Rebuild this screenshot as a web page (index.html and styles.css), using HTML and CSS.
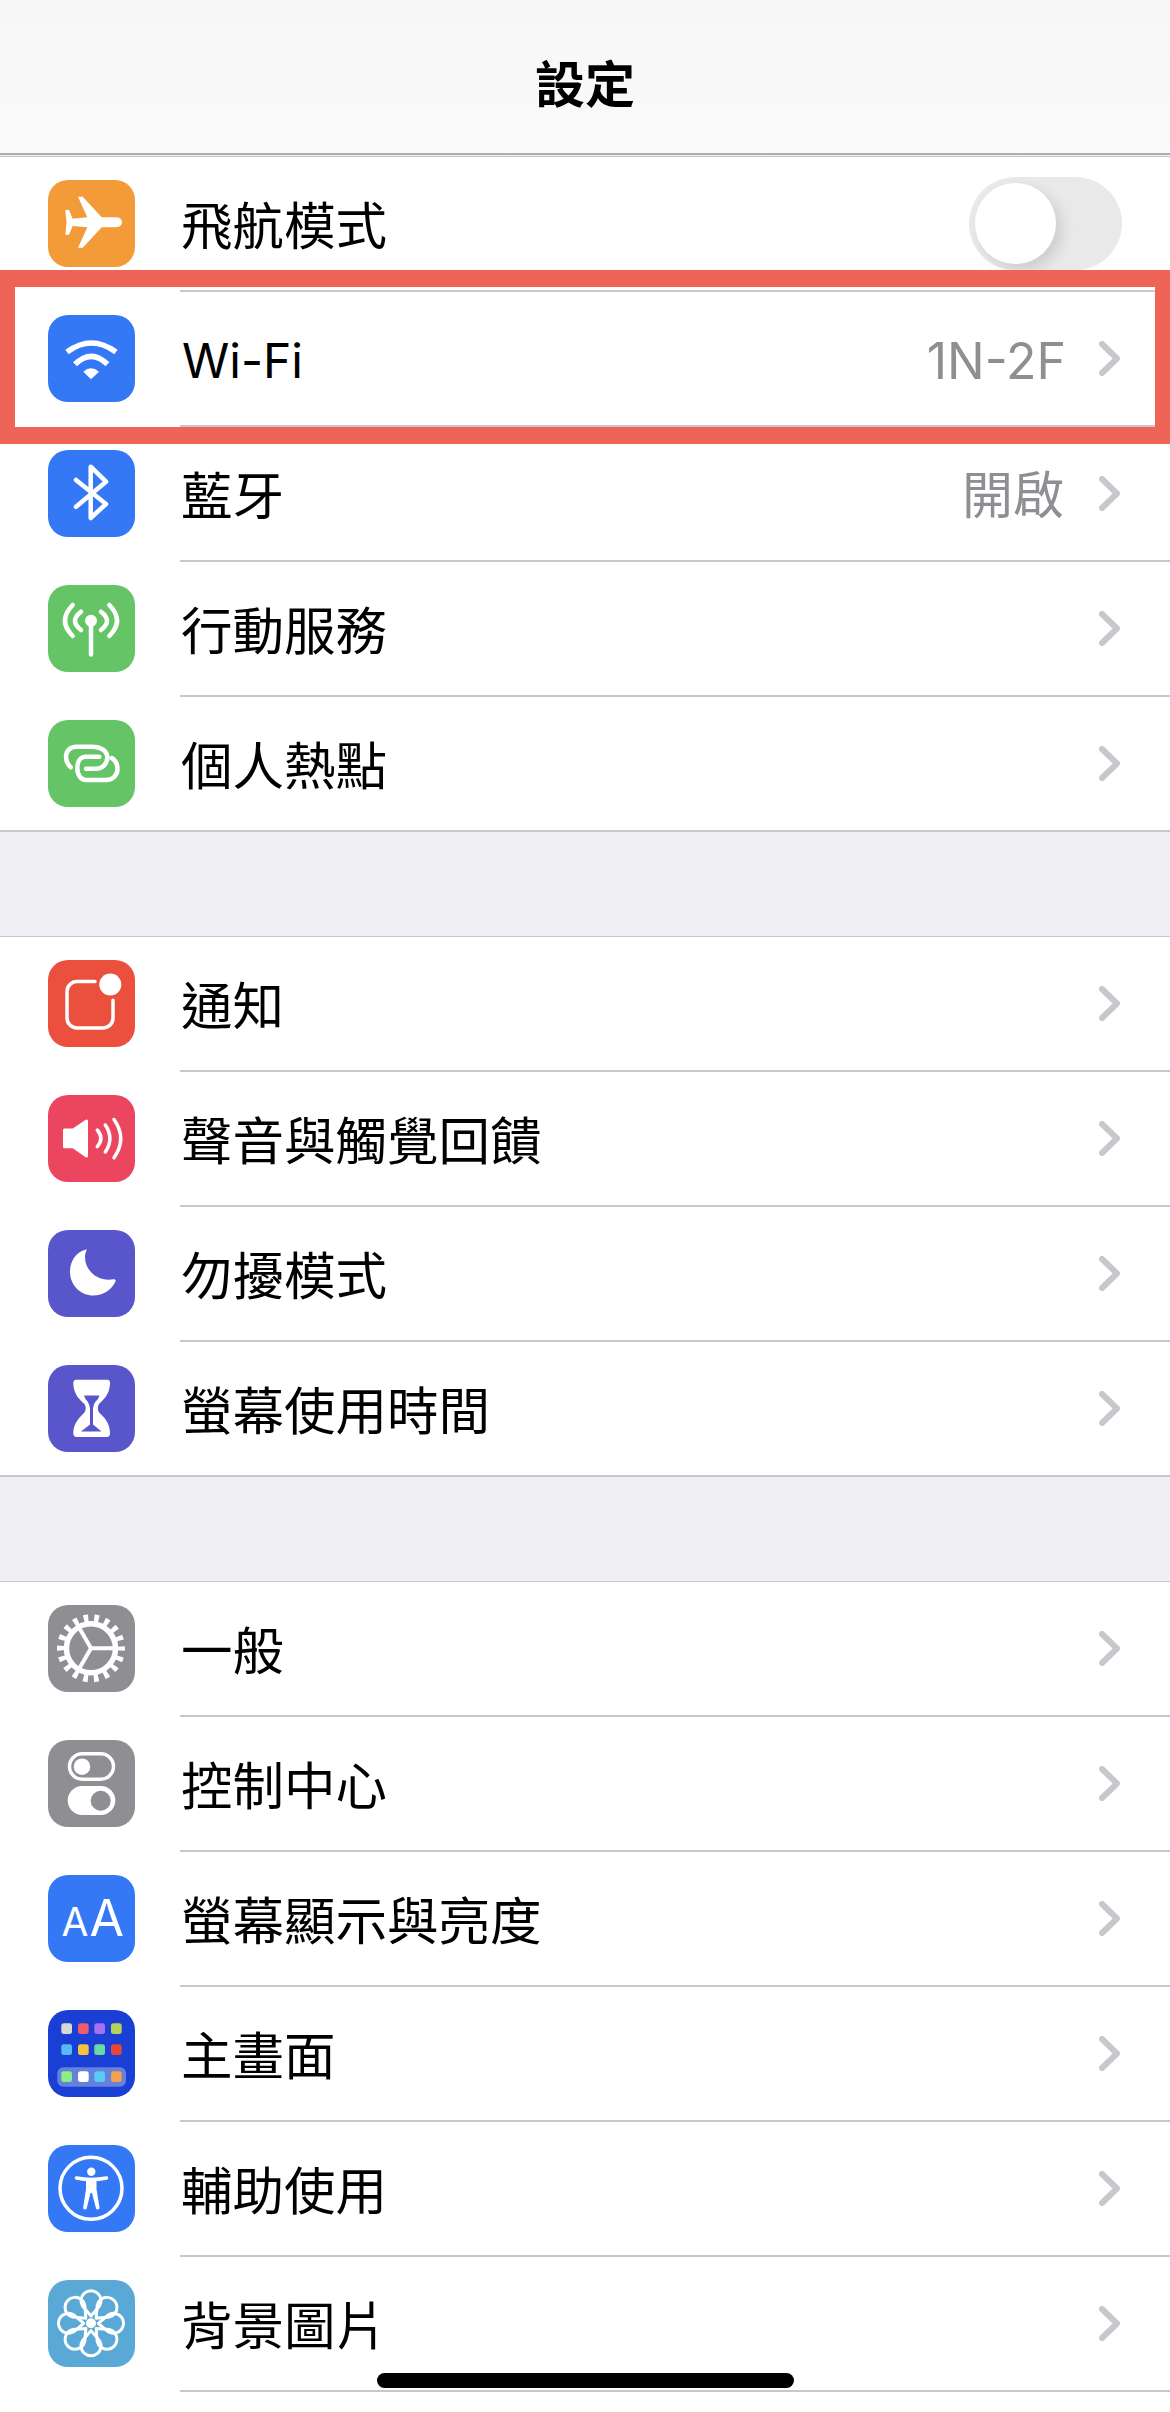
FILE: index.html
```html
<!DOCTYPE html>
<html lang="zh-Hant">
<head>
<meta charset="utf-8">
<title>設定</title>
<link rel="stylesheet" href="styles.css">
</head>
<body>
<div class="screen">
  <header class="nav"><h1 class="nav-title">設定</h1></header>

  <section class="group group-first">
    <div class="row">
      <div class="icon orange"><svg viewBox="0 0 87 87"><path class="w" d="M30 16.7H34.7L53.7 37.3H67Q74 37.3 74 42.3Q74 47.3 67 47.3H53.7L34.7 67.7H30L39.3 47.3L24.7 46L21 54.7H17.3L18.5 42.3L17.3 30H21L24.7 38.7L39.3 37.3Z"/></svg></div>
      <div class="label">飛航模式</div>
      <div class="toggle"><div class="thumb"></div></div>
    </div>
    <div class="row">
      <div class="icon blue"><svg viewBox="0 0 87 87"><path class="s s5" d="M19 37Q43.3 19 68 37"/><path class="s s5" d="M27 49.3Q43.3 33.3 59.5 49.3"/><path class="w" d="M35.3 56.7Q43 50 51 56.7L43 64.3Z"/></svg></div>
      <div class="label label-latin">Wi-Fi</div>
      <div class="value">1N-2F</div>
      <svg class="chev" viewBox="0 0 21 35"><path d="M3 3L18 17.5L3 32"/></svg>
    </div>
    <div class="row">
      <div class="icon blue"><svg viewBox="0 0 87 87"><path class="s" d="M28 30L58 54L42.7 68V16.7L58 31.7L28 56.7"/></svg></div>
      <div class="label">藍牙</div>
      <div class="value value-cjk">開啟</div>
      <svg class="chev" viewBox="0 0 21 35"><path d="M3 3L18 17.5L3 32"/></svg>
    </div>
    <div class="row">
      <div class="icon green"><svg viewBox="0 0 87 87"><circle class="w" cx="43" cy="35.7" r="6"/><path class="s" d="M43 36V69.5"/><path class="s" d="M33 26.7Q21 35.7 33 45M24.7 20Q9.3 35.7 24.7 51M53 26.7Q65 35.7 53 45M61.3 20Q76.7 35.7 61.3 51"/></svg></div>
      <div class="label">行動服務</div>
      <svg class="chev" viewBox="0 0 21 35"><path d="M3 3L18 17.5L3 32"/></svg>
    </div>
    <div class="row">
      <div class="icon green"><svg viewBox="0 0 87 87"><path class="s" d="M22.7 47.3C19.5 44 18 40.5 18 37C18 31 22 26.7 28 26.7H44C53 26.7 59.3 31 59.3 37.5C59.3 44 54 48.7 48 48.7H38"/><path class="s" d="M51.3 36.7H38C32 36.7 29.3 42 29.3 48C29.3 55 33 60 38 60H58C65 60 69.5 55 69.5 49C69.5 44 67 40 63.7 38"/></svg></div>
      <div class="label">個人熱點</div>
      <svg class="chev" viewBox="0 0 21 35"><path d="M3 3L18 17.5L3 32"/></svg>
    </div>
  </section>

  <section class="group group-second">
    <div class="row">
      <div class="icon red"><svg viewBox="0 0 87 87"><path class="s s3" d="M47 21.5H29A10 10 0 0 0 19 31.5V58A10 10 0 0 0 29 68H55A10 10 0 0 0 65 58V40.3"/><circle class="w" cx="62.3" cy="24.5" r="11"/></svg></div>
      <div class="label">通知</div>
      <svg class="chev" viewBox="0 0 21 35"><path d="M3 3L18 17.5L3 32"/></svg>
    </div>
    <div class="row">
      <div class="icon pink"><svg viewBox="0 0 87 87"><path class="w sj" d="M16.5 35H25.3L38.5 26V61L25.3 51.7H16.5Z"/><path class="s s3" d="M49.3 35Q56.5 43.4 49.3 51.7M57.3 30Q66.5 43.4 57.3 57M66 24.5Q79.5 43.4 66 62.7"/></svg></div>
      <div class="label">聲音與觸覺回饋</div>
      <svg class="chev" viewBox="0 0 21 35"><path d="M3 3L18 17.5L3 32"/></svg>
    </div>
    <div class="row">
      <div class="icon indigo"><svg viewBox="0 0 87 87"><path class="w" d="M38 19.5C28 22 22 31 22 41.7C22 55 32.5 65.5 45.5 65.5C55 65.5 63.5 60 67.5 51.5C68 50 67 49 65.5 49.3C50 52 37 41 37 27C37 24.5 37.5 22.5 38.5 20.5C39 19.5 38.7 19.3 38 19.5Z"/></svg></div>
      <div class="label">勿擾模式</div>
      <svg class="chev" viewBox="0 0 21 35"><path d="M3 3L18 17.5L3 32"/></svg>
    </div>
    <div class="row">
      <div class="icon indigo"><svg viewBox="0 0 87 87"><path class="w" d="M28.5 14.8H59Q62.5 14.8 62 19C61.5 30 55 35 51 39Q48.5 43.4 51 47.5C56 52 62 58 62 68Q62 72 59 72H28.5Q25.3 72 25.3 68C25.3 58 32 52 36.5 47.5Q39 43.4 36.5 39C32 35 26 30 25.3 19Q25 14.8 28.5 14.8Z"/><path class="cut" d="M36 30.5H51.5L50 34C46.5 37 45.5 40 45 43.4V59.5L53.5 66.5H33L42 59.5V43.4C41.5 40 40.5 37 37.5 34Z"/></svg></div>
      <div class="label">螢幕使用時間</div>
      <svg class="chev" viewBox="0 0 21 35"><path d="M3 3L18 17.5L3 32"/></svg>
    </div>
  </section>

  <section class="group group-last">
    <div class="row">
      <div class="icon gray"><svg viewBox="0 0 87 87"><circle class="s teeth" cx="43" cy="43.3" r="29.5"/><circle class="s s5" cx="43" cy="43.3" r="24.5"/><path class="s s4" d="M43 43.3H67M43 43.3L31 22.5M43 43.3L31 64"/></svg></div>
      <div class="label">一般</div>
      <svg class="chev" viewBox="0 0 21 35"><path d="M3 3L18 17.5L3 32"/></svg>
    </div>
    <div class="row">
      <div class="icon gray"><svg viewBox="0 0 87 87"><rect class="s s3" x="21.5" y="13.7" width="44" height="25.5" rx="12.7"/><circle class="w" cx="34" cy="26.7" r="8.3"/><rect class="w" x="19.7" y="46" width="47.6" height="29" rx="14.5"/><circle class="cut" cx="52.7" cy="60.7" r="10"/></svg></div>
      <div class="label">控制中心</div>
      <svg class="chev" viewBox="0 0 21 35"><path d="M3 3L18 17.5L3 32"/></svg>
    </div>
    <div class="row">
      <div class="icon blue"><svg viewBox="0 0 87 87"><text class="aa aa-s" x="13.5" y="61">A</text><text class="aa aa-l" x="41.5" y="61">A</text></svg></div>
      <div class="label">螢幕顯示與亮度</div>
      <svg class="chev" viewBox="0 0 21 35"><path d="M3 3L18 17.5L3 32"/></svg>
    </div>
    <div class="row">
      <div class="icon navy"><svg viewBox="0 0 87 87">
        <rect class="dock" x="9.3" y="57.3" width="68.7" height="19.4" rx="6"/>
        <rect fill="#d8d8d2" x="13.3" y="13.3" width="10.7" height="10.7" rx="2.5"/>
        <rect fill="#ec5c6c" x="30" y="13.3" width="10.7" height="10.7" rx="2.5"/>
        <rect fill="#a86ef0" x="46.3" y="13.3" width="10.7" height="10.7" rx="2.5"/>
        <rect fill="#b8d258" x="63" y="13.3" width="10.7" height="10.7" rx="2.5"/>
        <rect fill="#58b8f8" x="13.3" y="34.3" width="10.7" height="10.7" rx="2.5"/>
        <rect fill="#f5c33c" x="30" y="34.3" width="10.7" height="10.7" rx="2.5"/>
        <rect fill="#6ed8a4" x="46.3" y="34.3" width="10.7" height="10.7" rx="2.5"/>
        <rect fill="#e5483a" x="63" y="34.3" width="10.7" height="10.7" rx="2.5"/>
        <rect fill="#8af082" x="13.3" y="61.3" width="10.7" height="10.7" rx="2.5"/>
        <rect fill="#ffffff" x="30" y="61.3" width="10.7" height="10.7" rx="2.5"/>
        <rect fill="#5cc8f8" x="46.3" y="61.3" width="10.7" height="10.7" rx="2.5"/>
        <rect fill="#f4a050" x="63" y="61.3" width="10.7" height="10.7" rx="2.5"/>
      </svg></div>
      <div class="label">主畫面</div>
      <svg class="chev" viewBox="0 0 21 35"><path d="M3 3L18 17.5L3 32"/></svg>
    </div>
    <div class="row">
      <div class="icon blue"><svg viewBox="0 0 87 87"><circle class="s s3" cx="43" cy="43.3" r="31"/><circle class="w" cx="43.3" cy="26.7" r="4.2"/><path class="s s3" d="M28.5 33Q43.3 36 58.5 33"/><path class="w" d="M38 34H48.5V44L51.5 62.5A1.8 1.8 0 0 1 48 63.3L44 48H42.5L38.7 63.3A1.8 1.8 0 0 1 35.2 62.5L38 44Z"/></svg></div>
      <div class="label">輔助使用</div>
      <svg class="chev" viewBox="0 0 21 35"><path d="M3 3L18 17.5L3 32"/></svg>
    </div>
    <div class="row">
      <div class="icon teal"><svg viewBox="0 0 87 87"><defs><path id="petal" class="s s2" d="M43 36L34.5 26A10 10 0 1 1 51.5 26Z"/></defs>
        <use href="#petal"/>
        <use href="#petal" transform="rotate(45 43 43.3)"/>
        <use href="#petal" transform="rotate(90 43 43.3)"/>
        <use href="#petal" transform="rotate(135 43 43.3)"/>
        <use href="#petal" transform="rotate(180 43 43.3)"/>
        <use href="#petal" transform="rotate(225 43 43.3)"/>
        <use href="#petal" transform="rotate(270 43 43.3)"/>
        <use href="#petal" transform="rotate(315 43 43.3)"/>
        <circle class="w" cx="43" cy="43.3" r="5"/></svg></div>
      <div class="label">背景圖片</div>
      <svg class="chev" viewBox="0 0 21 35"><path d="M3 3L18 17.5L3 32"/></svg>
    </div>
  </section>

  <div class="highlight"></div>
  <div class="home-bar"></div>
</div>
</body>
</html>
```

FILE: styles.css
```css
* { box-sizing: border-box; }
html, body { margin: 0; padding: 0; background: #fff; }
.screen {
  position: relative;
  display: flex;
  flex-direction: column;
  width: 1170px;
  height: 2412px;
  overflow: hidden;
  background: #efeff4;
  font-family: Inter, "Noto Sans CJK TC", sans-serif;
  color: #000;
}
.nav {
  flex: none;
  height: 155px;
  display: flex;
  align-items: flex-start;
  justify-content: center;
  padding-top: 50px;
  background: linear-gradient(180deg, #f7f7f7, #fafafa);
  border-bottom: 2px solid #aeaeb2;
}
.nav-title {
  margin: 0;
  font-size: 50px;
  line-height: 70px;
  font-weight: 600;
}
.group {
  flex: none;
  margin-top: 104px;
  background: #fff;
  border-top: 1px solid #c8c7cc;
}
.group-first { margin-top: 1px; }
.group-last { flex: 1; }
.row {
  position: relative;
  display: flex;
  align-items: center;
  height: 135px;
  padding: 0 48px 2px 48px;
}
.row::after {
  content: "";
  position: absolute;
  left: 180px;
  right: 0;
  bottom: 0;
  height: 2px;
  background: #c8c7cc;
}
.group-first .row:last-child::after,
.group-second .row:last-child::after { left: 0; }
.icon {
  flex: none;
  width: 87px;
  height: 87px;
  border-radius: 20px;
}
.icon svg { display: block; width: 87px; height: 87px; }
.orange { background: #f29b38; }
.blue { background: #3478f6; }
.green { background: #65c466; }
.red { background: #eb503e; }
.pink { background: #ec4560; }
.indigo { background: #5856ca; }
.gray { background: #8e8e93; }
.navy { background: #1a3fd4; }
.teal { background: #5aa8d6; }
.w { fill: #fff; }
.sj { stroke: #fff; stroke-width: 3; stroke-linejoin: round; }
.s {
  fill: none;
  stroke: #fff;
  stroke-width: 4.5;
  stroke-linecap: round;
  stroke-linejoin: round;
}
.s5 { stroke-width: 5.5; stroke-linecap: butt; }
.s4 { stroke-width: 4; }
.s3 { stroke-width: 3.5; }
.s2 { stroke-width: 3; }
.teeth { stroke-width: 9; stroke-linecap: butt; stroke-dasharray: 4.5 5.8; stroke-dashoffset: 2.25; }
.indigo .cut { fill: #5856ca; }
.gray .cut { fill: #8e8e93; }
.dock { fill: #6481dc; }
.aa { fill: #fff; font-family: Inter, sans-serif; font-weight: 400; }
.aa-s { font-size: 39px; }
.aa-l { font-size: 50px; }
.label {
  flex: 1;
  margin-left: 46px;
  padding-top: 5px;
  font-size: 51.5px;
  line-height: 70px;
  white-space: nowrap;
}
.label-latin { margin-left: 47px; font-size: 48px; }
.value {
  margin-right: 33px;
  padding-top: 5px;
  font-size: 50px;
  line-height: 70px;
  color: #8e8e93;
  white-space: nowrap;
}
.value-cjk { margin-right: 35px; font-size: 51px; }
.chev {
  flex: none;
  width: 21px;
  height: 35px;
  margin-right: 2px;
}
.chev path {
  fill: none;
  stroke: #c7c7cc;
  stroke-width: 6;
  stroke-linecap: round;
  stroke-linejoin: round;
}
.toggle {
  position: relative;
  flex: none;
  width: 153px;
  height: 93px;
  border-radius: 47px;
  background: #e9e9ea;
}
.thumb {
  position: absolute;
  left: 6px;
  top: 6px;
  width: 81px;
  height: 81px;
  border-radius: 50%;
  background: #fff;
  box-shadow: 6px 6px 14px rgba(0, 0, 0, 0.12);
}
.highlight {
  position: absolute;
  left: 0;
  top: 270px;
  width: 1170px;
  height: 174px;
  border-style: solid;
  border-color: #ee6457;
  border-width: 17px 15px;
}
.home-bar {
  position: absolute;
  left: 377px;
  top: 2373px;
  width: 417px;
  height: 15px;
  border-radius: 8px;
  background: #000;
}
```
